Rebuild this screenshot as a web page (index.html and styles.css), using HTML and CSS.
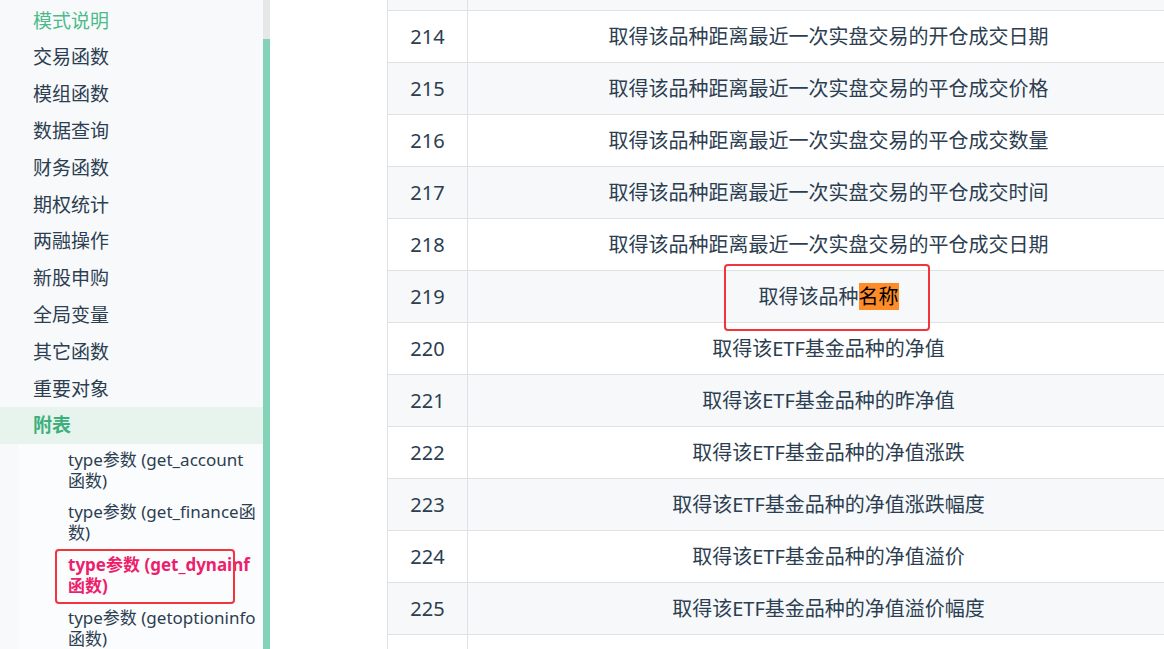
FILE: index.html
```html
<!DOCTYPE html>
<html lang="zh-CN">
<head>
    <meta charset="UTF-8">
    <meta name="viewport" content="width=device-width, initial-scale=1.0">
    <title>附表</title>
    <link rel="stylesheet" href="styles.css">
</head>
<body>
    <div class="page">
        <aside class="sidebar">
            <ul class="sidebar-links">
                <li><a class="sidebar-link current">模式说明</a></li>
                <li><a class="sidebar-link">交易函数</a></li>
                <li><a class="sidebar-link">模组函数</a></li>
                <li><a class="sidebar-link">数据查询</a></li>
                <li><a class="sidebar-link">财务函数</a></li>
                <li><a class="sidebar-link">期权统计</a></li>
                <li><a class="sidebar-link">两融操作</a></li>
                <li><a class="sidebar-link">新股申购</a></li>
                <li><a class="sidebar-link">全局变量</a></li>
                <li><a class="sidebar-link">其它函数</a></li>
                <li><a class="sidebar-link">重要对象</a></li>
                <li>
                    <a class="sidebar-link active">附表</a>
                    <ul class="sidebar-sub">
                        <li><a class="sub-link">type参数 (get_account 函数)</a></li>
                        <li><a class="sub-link">type参数 (get_finance函数)</a></li>
                        <li class="marked">
                            <a class="sub-link active">type参数 (get_dynainf 函数)</a>
                            <span class="mark-box side-box"></span>
                        </li>
                        <li><a class="sub-link">type参数 (getoptioninfo 函数)</a></li>
                    </ul>
                </li>
            </ul>
        </aside>
        <div class="sidebar-scroll">
            <div class="scroll-track"></div>
            <div class="scroll-thumb"></div>
        </div>
        <main class="content">
            <table class="param-table">
                <tbody>
                    <tr><td class="num">&nbsp;</td><td>&nbsp;</td></tr>
                    <tr><td class="num">214</td><td>取得该品种距离最近一次实盘交易的开仓成交日期</td></tr>
                    <tr><td class="num">215</td><td>取得该品种距离最近一次实盘交易的平仓成交价格</td></tr>
                    <tr><td class="num">216</td><td>取得该品种距离最近一次实盘交易的平仓成交数量</td></tr>
                    <tr><td class="num">217</td><td>取得该品种距离最近一次实盘交易的平仓成交时间</td></tr>
                    <tr><td class="num">218</td><td>取得该品种距离最近一次实盘交易的平仓成交日期</td></tr>
                    <tr>
                        <td class="num">219</td>
                        <td><span class="marked-text">取得该品种<mark>名称</mark><span class="mark-box cell-box"></span></span></td>
                    </tr>
                    <tr><td class="num">220</td><td>取得该ETF基金品种的净值</td></tr>
                    <tr><td class="num">221</td><td>取得该ETF基金品种的昨净值</td></tr>
                    <tr><td class="num">222</td><td>取得该ETF基金品种的净值涨跌</td></tr>
                    <tr><td class="num">223</td><td>取得该ETF基金品种的净值涨跌幅度</td></tr>
                    <tr><td class="num">224</td><td>取得该ETF基金品种的净值溢价</td></tr>
                    <tr><td class="num">225</td><td>取得该ETF基金品种的净值溢价幅度</td></tr>
                    <tr><td class="num">&nbsp;</td><td>&nbsp;</td></tr>
                </tbody>
            </table>
        </main>
    </div>
</body>
</html>
```

FILE: styles.css
```css
html, body {
    margin: 0;
    padding: 0;
    height: 100%;
    overflow: hidden;
    background: #fff;
}
body {
    font-family: "Noto Sans", "Noto Sans CJK SC", sans-serif;
    color: #2c3e50;
}
ul {
    list-style: none;
    margin: 0;
    padding: 0;
}
.page {
    display: flex;
    height: 649px;
}
.sidebar {
    width: 263px;
    flex-shrink: 0;
    background-color: #f8f9fb;
    overflow: hidden;
}
.sidebar-links {
    padding-top: 2.6px;
}
.sidebar-link {
    display: block;
    padding: 6px 0 6px 33px;
    line-height: 24.8px;
    font-size: 19px;
    color: #2c3e50;
}
.sidebar-link.current {
    color: #4cbb8b;
}
.sidebar-link.active {
    color: #3eaf7c;
    font-weight: bold;
    background-color: #e7f4ee;
}
.sidebar-sub {
    margin-left: 18px;
    background-color: #fbfcfd;
}
.sidebar-sub li {
    position: relative;
    padding: 4.5px 0 6.3px 50px;
    width: 194px;
}
.sub-link {
    display: block;
    font-size: 17px;
    line-height: 21px;
    color: #2c3e50;
}
.sub-link.active {
    color: #ec1f6c;
    font-weight: bold;
}
.sidebar-scroll {
    width: 7px;
    flex-shrink: 0;
    display: flex;
    flex-direction: column;
}
.scroll-track {
    height: 39px;
    background-color: #e7e7e7;
}
.scroll-thumb {
    flex: 1;
    background-color: #84d2b8;
}
.content {
    flex: 1;
    padding-left: 117px;
    overflow: hidden;
}
.param-table {
    border-collapse: collapse;
    margin-top: -42px;
    width: 803px;
    font-size: 20px;
    line-height: 26px;
}
.param-table td {
    border: 1px solid #dfe2e5;
    padding: 12.5px 16px;
    text-align: center;
    white-space: nowrap;
}
.param-table td.num {
    width: 47px;
}
.param-table tr:nth-child(odd) {
    background-color: #f6f8fa;
}
.param-table mark {
    background-color: #ff8c26;
    color: #000;
}
.marked-text {
    position: relative;
    display: inline-block;
}
.mark-box {
    position: absolute;
    border: 2.5px solid #f2343c;
    border-radius: 4px;
    box-sizing: border-box;
}
.cell-box {
    left: -35px;
    top: -20px;
    width: 206px;
    height: 67px;
}
.side-box {
    left: 37px;
    top: -1px;
    width: 180px;
    height: 55px;
}
```
